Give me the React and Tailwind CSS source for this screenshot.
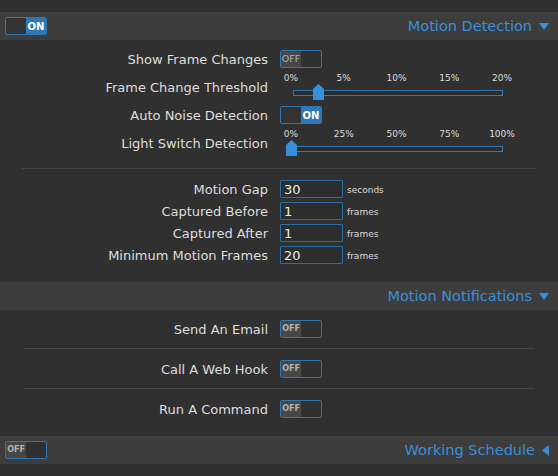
import { useState } from 'react';

const FONT = { fontFamily: '"DejaVu Sans", "Liberation Sans", sans-serif' };

function Toggle({ on, small }) {
  return (
    <div className="flex h-[18px] w-[42px] overflow-hidden rounded-[2px] border border-[#2f78b3] bg-[#303030]">
      {on ? (
        <>
          <div className="w-[20px] bg-[#333]" />
          <div className="flex flex-1 items-center justify-center bg-[#2f78b3] text-[10px] font-bold text-white">ON</div>
        </>
      ) : (
        <>
          <div className={`flex w-[20px] items-center justify-center bg-[#474747] text-[#b5b5b5] ${small ? 'text-[8px] font-bold' : 'text-[9.5px]'}`}>OFF</div>
          <div className="flex-1" />
        </>
      )}
    </div>
  );
}

function Slider({ ticks, pos }) {
  const left = 11 + pos * 210;
  return (
    <div className="relative h-[28px] w-[232px]">
      {ticks.map((t, i) => (
        <span
          key={t}
          className="absolute top-[1px] -translate-x-1/2 text-[9px] leading-[9px] text-[#ddd]"
          style={{ left: 11 + i * 52.75 }}
        >
          {t}
        </span>
      ))}
      <div className="absolute left-[13px] top-[17px] h-[6px] w-[210px] border border-[#2f78b3] bg-[#2c2c2c]" />
      <svg className="absolute top-[11px]" style={{ left: left - 5.5 }} width="11" height="16" viewBox="0 0 11 16">
        <polygon points="0,5 5.5,0 11,5 11,16 0,16" fill="#3590d9" />
      </svg>
    </div>
  );
}

function Band({ title, open, toggle }) {
  return (
    <div className="flex h-[28px] items-center justify-between bg-[#3d3d3d] pl-[5px] pr-[9px]">
      <div>{toggle}</div>
      <div className="flex items-center gap-[7px] text-[14.5px] text-[#3a8fd8]">
        <span className="pt-px">{title}</span>
        {open ? (
          <svg width="10" height="7" viewBox="0 0 10 7"><polygon points="0,0 10,0 5,7" fill="#3a8fd8" /></svg>
        ) : (
          <svg width="7" height="11" viewBox="0 0 7 11"><polygon points="7,0 7,11 0,5.5" fill="#3a8fd8" /></svg>
        )}
      </div>
    </div>
  );
}

function Row({ label, h = 'h-[28px]', children }) {
  return (
    <div className={`grid grid-cols-[268px_1fr] items-center gap-x-3 ${h}`}>
      <div className="pt-px text-right text-[13px] text-[#dedede]">{label}</div>
      <div className="flex items-center">{children}</div>
    </div>
  );
}

function NumField({ value, unit }) {
  const [v, setV] = useState(value);
  return (
    <>
      <input
        value={v}
        onChange={(e) => setV(e.target.value)}
        className="h-[18px] w-[63px] rounded-[1px] border border-[#2b6fa8] bg-[#2d2d2d] px-[3px] text-[13px] leading-[16px] text-[#eee] outline-none"
        style={FONT}
      />
      <span className="ml-[4px] mt-[3px] text-[9px] text-[#ddd]">{unit}</span>
    </>
  );
}

export default function App() {
  return (
    <div className="min-h-[476px] w-full bg-[#303030] pt-3" style={FONT}>
      <Band title="Motion Detection" open toggle={<Toggle on />} />

      <div className="pt-[5px]">
        <Row label="Show Frame Changes"><Toggle /></Row>
        <Row label="Frame Change Threshold"><Slider ticks={['0%', '5%', '10%', '15%', '20%']} pos={0.13} /></Row>
        <Row label="Auto Noise Detection"><Toggle on /></Row>
        <Row label="Light Switch Detection"><Slider ticks={['0%', '25%', '50%', '75%', '100%']} pos={0} /></Row>
      </div>

      <div className="mx-[22px] mb-[9px] mt-[11px] h-px bg-[#454545]" />

      <div className="pb-4">
        <Row label="Motion Gap" h="h-[22px]"><NumField value="30" unit="seconds" /></Row>
        <Row label="Captured Before" h="h-[22px]"><NumField value="1" unit="frames" /></Row>
        <Row label="Captured After" h="h-[22px]"><NumField value="1" unit="frames" /></Row>
        <Row label="Minimum Motion Frames" h="h-[22px]"><NumField value="20" unit="frames" /></Row>
      </div>

      <Band title="Motion Notifications" open />

      <div className="pb-2">
        <Row label="Send An Email" h="h-[38px]"><Toggle small /></Row>
        <div className="mx-[24px] mb-px h-px bg-[#454545]" />
        <Row label="Call A Web Hook" h="h-[38px]"><Toggle small /></Row>
        <div className="mx-[24px] mb-px h-px bg-[#454545]" />
        <Row label="Run A Command" h="h-[38px]"><Toggle small /></Row>
      </div>

      <Band title="Working Schedule" toggle={<Toggle small />} />
    </div>
  );
}
